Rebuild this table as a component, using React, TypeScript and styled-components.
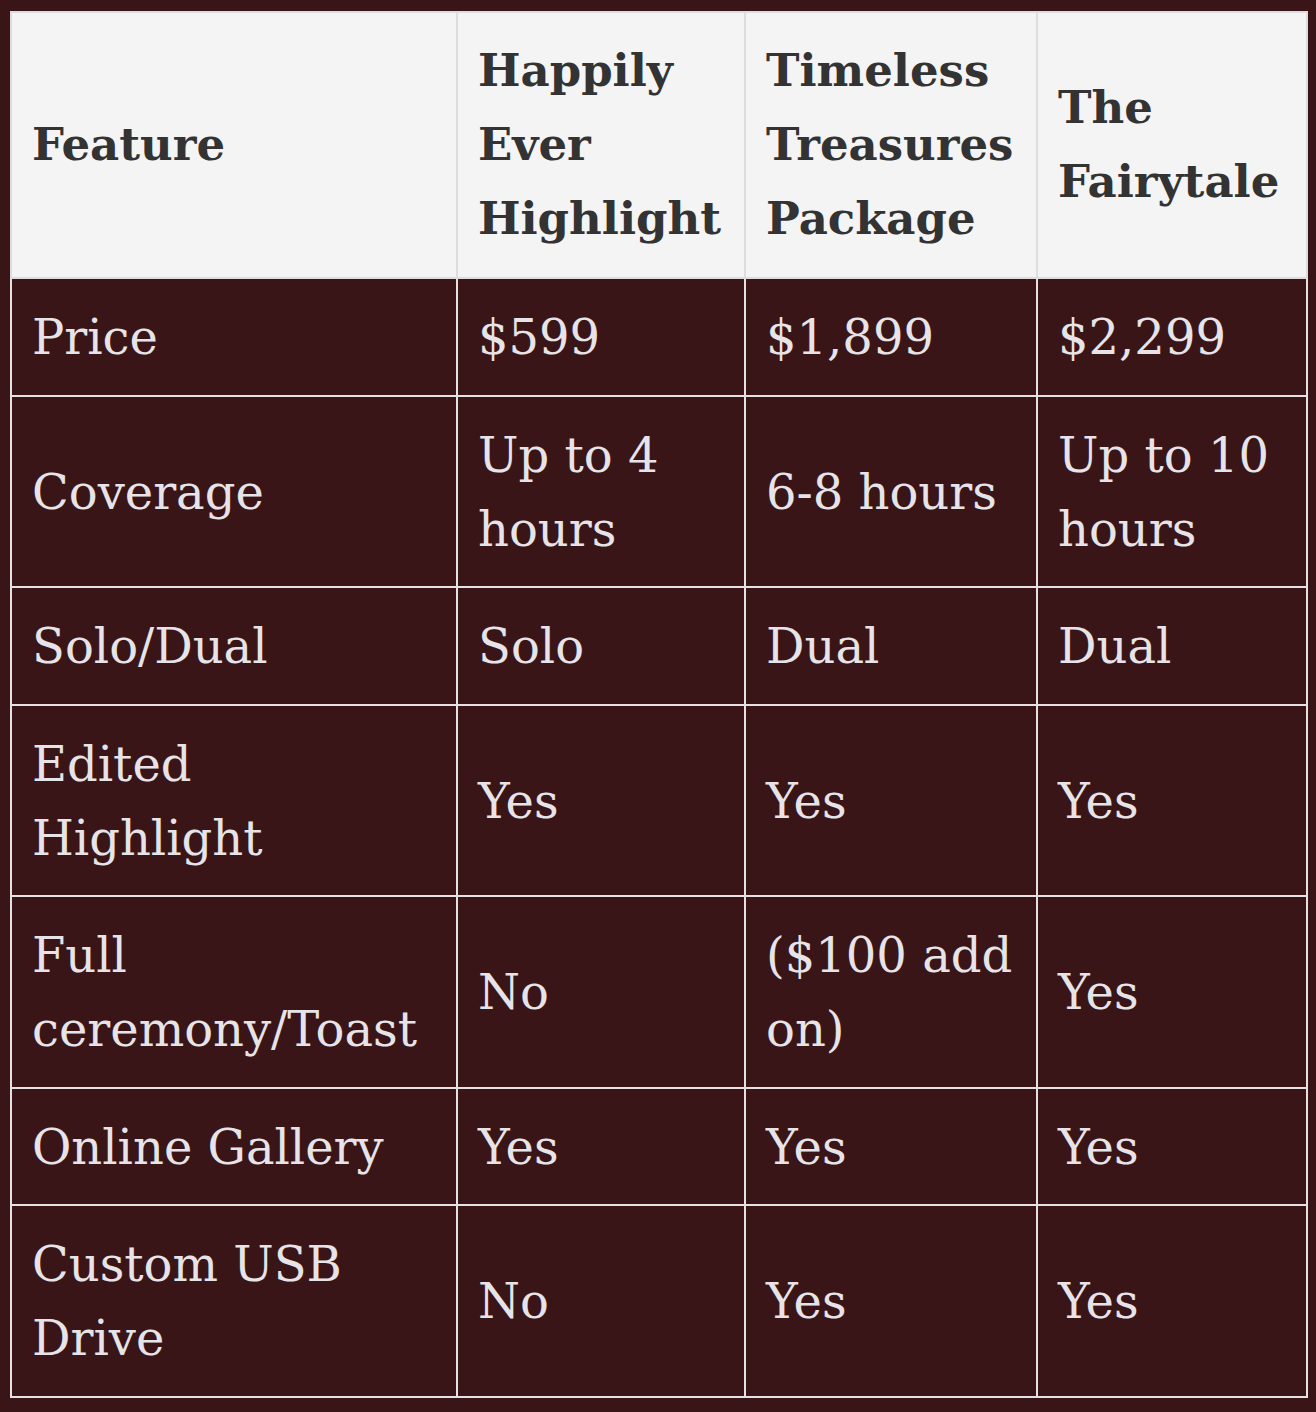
import React from "react";
import styled, { createGlobalStyle } from "styled-components";

const GlobalStyle = createGlobalStyle`
  html, body {
    margin: 0;
    padding: 0;
    background: #3a1517;
  }
`;

const Page = styled.div`
  padding: 11px 10px 14px 10px;
  min-height: 1412px;
  box-sizing: border-box;
  background: #3a1517;
`;

const Table = styled.table`
  width: 100%;
  border-collapse: collapse;
  table-layout: fixed;
  font-family: "DejaVu Serif", "Liberation Serif", serif;
  line-height: 74px;
`;

const HeadCell = styled.th`
  background: #f4f4f4;
  color: #333333;
  font-size: 45px;
  font-weight: 700;
  text-align: left;
  vertical-align: middle;
  padding: 21px 22px 21px 20px;
  border: 2px solid #dddddd;
`;

const Cell = styled.td`
  color: #e6e4e8;
  font-size: 48px;
  font-weight: 400;
  vertical-align: middle;
  padding: 21px 22px 20.5px 20px;
  border: 2px solid #e4e2e4;
`;

const columns = [446, 288, 292, 270];

const headers = [
  "Feature",
  "Happily Ever Highlight",
  "Timeless Treasures Package",
  "The Fairytale",
];

// \u00a0 keeps "($100 add" together so it breaks before "on)"
const rows: string[][] = [
  ["Price", "$599", "$1,899", "$2,299"],
  ["Coverage", "Up to 4 hours", "6-8 hours", "Up to 10 hours"],
  ["Solo/Dual", "Solo", "Dual", "Dual"],
  ["Edited Highlight", "Yes", "Yes", "Yes"],
  ["Full ceremony/Toast", "No", "($100\u00a0add on)", "Yes"],
  ["Online Gallery", "Yes", "Yes", "Yes"],
  ["Custom USB Drive", "No", "Yes", "Yes"],
];

export default function App() {
  return (
    <>
      <GlobalStyle />
      <Page>
        <Table>
          <colgroup>
            {columns.map((w, i) => (
              <col key={i} style={{ width: w }} />
            ))}
          </colgroup>
          <thead>
            <tr>
              {headers.map((h) => (
                <HeadCell key={h}>{h}</HeadCell>
              ))}
            </tr>
          </thead>
          <tbody>
            {rows.map((r) => (
              <tr key={r[0]}>
                {r.map((c, i) => (
                  <Cell key={i}>{c}</Cell>
                ))}
              </tr>
            ))}
          </tbody>
        </Table>
      </Page>
    </>
  );
}
